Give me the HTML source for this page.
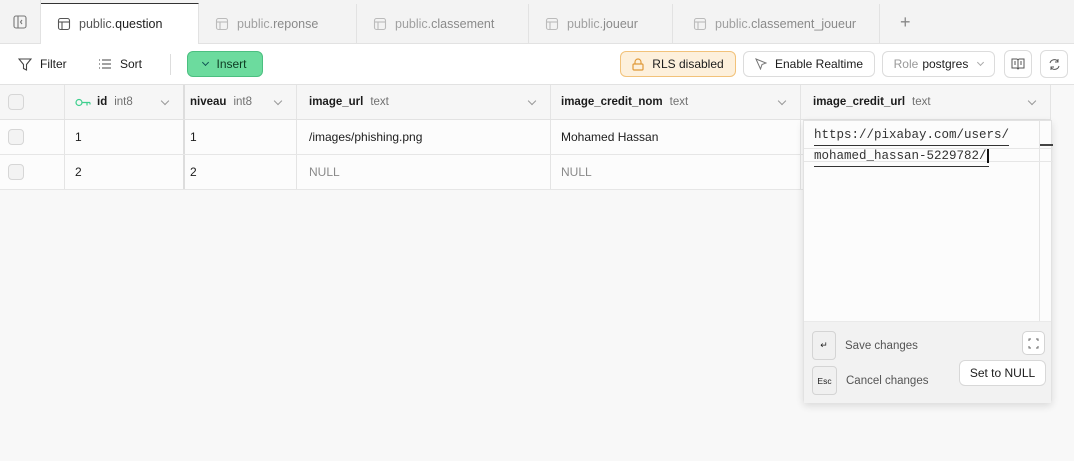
<!DOCTYPE html>
<html><head><meta charset="utf-8"><style>
*{box-sizing:border-box;margin:0;padding:0}
body{width:1074px;height:461px;overflow:hidden;background:#f8f8f8;font-family:"Liberation Sans",sans-serif;font-size:12px;color:#1c1c1c;position:relative}
.abs{position:absolute}
.tabbar{left:0;top:0;width:1074px;height:44px;background:#f3f3f3;border-bottom:1px solid #e2e2e2}
.tab{position:absolute;top:4px;height:40px;border-right:1px solid #e2e2e2;display:flex;align-items:center;padding-left:16px;gap:8px;color:#a0a0a0;font-size:12.5px}
.tab b{font-weight:normal;color:#8a8a8a}
.tab.act{background:#fff;border-top:1px solid #333;color:#555;height:41px}
.tab.act b{color:#1c1c1c}
.toolbar{left:0;top:44px;width:1074px;height:41px;background:#fff;border-bottom:1px solid #e2e2e2}
.btn{position:absolute;top:8px;height:25px;border:1px solid #dcdcdc;border-radius:6px;display:flex;align-items:center;justify-content:center;gap:8px;font-size:12px;background:#fff}
.hdr{left:0;top:85px;width:1051px;height:35px;background:#f6f6f6;border-bottom:1px solid #e2e2e2}
.cell{position:absolute;top:0;height:100%;border-right:1px solid #e4e4e4;display:flex;align-items:center;padding-left:10px}
.hdr .cell b{font-weight:bold;font-size:11.5px;margin-right:7px}
.hdr .cell i{font-style:normal;color:#707070;font-size:11.5px}
.chev{position:absolute;right:15px;top:13px;width:6px;height:6px;border-right:1px solid #999;border-bottom:1px solid #999;transform:rotate(45deg)}
.row{left:0;width:1051px;height:35px;background:#fcfcfc;border-bottom:1px solid #e6e6e6}
.cb{width:16px;height:16px;border:1px solid #d6d6d6;border-radius:4px;background:#f3f3f3;margin-left:0}
.pop{left:803px;top:120px;width:249px;height:283px;background:#fcfcfc;border:1px solid #e2e2e2;box-shadow:0 3px 8px rgba(0,0,0,.12);border-radius:0 0 4px 4px}
.key{position:absolute;width:24px;height:29px;border:1px solid #d4d4d4;border-radius:4px;background:#f0f0f0;display:flex;align-items:center;justify-content:center;font-size:9px}
</style></head><body>
<div class="abs tabbar">
 <div class="abs" style="left:0;top:0;width:41px;height:44px;display:flex;align-items:center;justify-content:center;border-right:1px solid #e2e2e2">
  <svg width="14" height="14" viewBox="0 0 14 14" fill="none" stroke="#777" stroke-width="1.1"><rect x="1" y="1" width="12" height="12" rx="2"/><line x1="5" y1="1" x2="5" y2="13"/><path d="M9 5L7.5 7L9 9"/></svg></div>
 <div class="tab act" style="left:41px;width:158px;top:3px"><svg width="14" height="14" viewBox="0 0 14 14" fill="none" stroke="#555" stroke-width="1.1"><rect x="1.5" y="1.5" width="11" height="11" rx="2"/><line x1="1.5" y1="5" x2="12.5" y2="5"/><line x1="5" y1="5" x2="5" y2="12.5"/></svg><span>public.<b>question</b></span></div>
 <div class="tab" style="left:199px;width:158px"><svg width="14" height="14" viewBox="0 0 14 14" fill="none" stroke="#bbb" stroke-width="1.1"><rect x="1.5" y="1.5" width="11" height="11" rx="2"/><line x1="1.5" y1="5" x2="12.5" y2="5"/><line x1="5" y1="5" x2="5" y2="12.5"/></svg><span>public.<b>reponse</b></span></div>
 <div class="tab" style="left:357px;width:172px"><svg width="14" height="14" viewBox="0 0 14 14" fill="none" stroke="#bbb" stroke-width="1.1"><rect x="1.5" y="1.5" width="11" height="11" rx="2"/><line x1="1.5" y1="5" x2="12.5" y2="5"/><line x1="5" y1="5" x2="5" y2="12.5"/></svg><span>public.<b>classement</b></span></div>
 <div class="tab" style="left:529px;width:144px"><svg width="14" height="14" viewBox="0 0 14 14" fill="none" stroke="#bbb" stroke-width="1.1"><rect x="1.5" y="1.5" width="11" height="11" rx="2"/><line x1="1.5" y1="5" x2="12.5" y2="5"/><line x1="5" y1="5" x2="5" y2="12.5"/></svg><span>public.<b>joueur</b></span></div>
 <div class="tab" style="left:673px;width:207px;padding-left:20px"><svg width="14" height="14" viewBox="0 0 14 14" fill="none" stroke="#bbb" stroke-width="1.1"><rect x="1.5" y="1.5" width="11" height="11" rx="2"/><line x1="1.5" y1="5" x2="12.5" y2="5"/><line x1="5" y1="5" x2="5" y2="12.5"/></svg><span>public.<b>classement_joueur</b></span></div>
 <div class="abs" style="left:900px;top:12px;font-size:18px;color:#888;line-height:20px">+</div>
</div>
<div class="abs toolbar">
 <div class="abs" style="left:18px;top:13px;display:flex;align-items:center;gap:8px"><svg width="14" height="13" viewBox="0 0 14 13" fill="none" stroke="#444" stroke-width="1.1"><path d="M1 1h12L8.5 6.5V12L5.5 10.5V6.5Z"/></svg>Filter</div>
 <div class="abs" style="left:98px;top:13px;display:flex;align-items:center;gap:8px"><svg width="14" height="12" viewBox="0 0 14 12" stroke="#444" stroke-width="1.1"><path d="M1 2h1M1 6h1M1 10h1M4 2h9M4 6h9M4 10h9"/></svg>Sort</div>
 <div class="abs" style="left:170px;top:10px;width:1px;height:21px;background:#ddd"></div>
 <div class="btn" style="left:187px;width:76px;top:7px;height:26px;background:#6cdb9e;border-color:#4bbf80;color:#0d3a22"><span style="width:5px;height:5px;border-right:1px solid #155;border-bottom:1px solid #155;transform:rotate(45deg);margin-top:-3px"></span>Insert</div>
 <div class="btn" style="left:620px;width:116px;top:7px;height:26px;background:#fdf0dc;border-color:#f2c27a"><svg width="12" height="13" viewBox="0 0 12 13" fill="none" stroke="#e09a3a" stroke-width="1.2"><rect x="1" y="6" width="10" height="6" rx="1"/><path d="M3 6V4a3 3 0 016 0v2"/></svg>RLS disabled</div>
 <div class="btn" style="left:743px;width:132px;top:7px;height:26px"><svg width="12" height="12" viewBox="0 0 12 12" fill="none" stroke="#777" stroke-width="1"><path d="M1 1l10 4-4 1.5L5.5 11Z"/></svg>Enable Realtime</div>
 <div class="btn" style="left:882px;width:113px;top:7px;height:26px;gap:4px"><span style="color:#999">Role</span> postgres <span style="width:5px;height:5px;border-right:1px solid #aaa;border-bottom:1px solid #aaa;transform:rotate(45deg);margin:-3px 0 0 6px"></span></div>
 <div class="btn" style="left:1004px;width:28px;top:6px;height:28px"><svg width="14" height="12" viewBox="0 0 14 12" fill="none" stroke="#555" stroke-width="1"><path d="M1 1h5l1 1 1-1h5v9H8l-1 1-1-1H1Z"/><path d="M7 2v9M3 4h2M3 6h2M9 4h2M9 6h2"/></svg></div>
 <div class="btn" style="left:1040px;width:28px;top:6px;height:28px"><svg width="13" height="13" viewBox="0 0 13 13" fill="none" stroke="#555" stroke-width="1"><path d="M2 5a4.5 4.5 0 018-1.5M11 8a4.5 4.5 0 01-8 1.5M10 1v3H7M3 12V9h3"/></svg></div>
</div>
<div class="abs hdr">
 <div class="cell" style="left:0;width:65px;padding-left:8px"><div class="cb"></div></div>
 <div class="cell" style="left:65px;width:120px;border-right:2px solid #ddd"><svg width="16" height="9" viewBox="0 0 16 9" fill="none" stroke="#3ecf8e" stroke-width="1.2" style="margin-right:6px"><circle cx="4" cy="4.5" r="3"/><path d="M7 4.5h8M12 4.5v3M15 4.5v2"/></svg><b>id</b><i>int8</i><span class="chev"></span></div>
 <div class="cell" style="left:185px;width:112px;padding-left:5px"><b>niveau</b><i>int8</i><span class="chev"></span></div>
 <div class="cell" style="left:297px;width:254px;padding-left:12px"><b>image_url</b><i>text</i><span class="chev"></span></div>
 <div class="cell" style="left:551px;width:250px;padding-left:10px"><b>image_credit_nom</b><i>text</i><span class="chev"></span></div>
 <div class="cell" style="left:801px;width:250px;padding-left:12px"><b>image_credit_url</b><i>text</i><span class="chev"></span></div>
</div>
<div class="abs row" style="top:120px">
 <div class="cell" style="left:0;width:65px;padding-left:8px"><div class="cb"></div></div>
 <div class="cell" style="left:65px;width:120px;border-right:2px solid #ddd">1</div>
 <div class="cell" style="left:185px;width:112px;padding-left:5px">1</div>
 <div class="cell" style="left:297px;width:254px;padding-left:12px">/images/phishing.png</div>
 <div class="cell" style="left:551px;width:250px;padding-left:10px">Mohamed Hassan</div>
</div>
<div class="abs row" style="top:155px">
 <div class="cell" style="left:0;width:65px;padding-left:8px"><div class="cb"></div></div>
 <div class="cell" style="left:65px;width:120px;border-right:2px solid #ddd">2</div>
 <div class="cell" style="left:185px;width:112px;padding-left:5px">2</div>
 <div class="cell" style="left:297px;width:254px;padding-left:12px;color:#8a8a8a">NULL</div>
 <div class="cell" style="left:551px;width:250px;padding-left:10px;color:#8a8a8a">NULL</div>
</div>
<div class="abs pop">
 <div class="abs" style="left:235px;top:0;width:1px;height:200px;background:#e4e4e4"></div>
 <div class="abs" style="left:0;top:27px;width:249px;height:14px;border-top:1px solid #e6e6e6;border-bottom:1px solid #e6e6e6"></div>
 <div class="abs" style="left:236px;top:23px;width:13px;height:2px;background:#444"></div>
 <div class="abs" style="left:10px;top:4px;font-family:'Liberation Mono',monospace;font-size:12.5px;line-height:20px;color:#333">
  <div style="border-bottom:1px solid #333;display:inline-block">https://pixabay.com/users/</div><br>
  <div style="border-bottom:1px solid #333;display:inline-block">mohamed_hassan-5229782/<span style="border-left:2px solid #111;margin-left:0"></span></div>
 </div>
 <div class="abs" style="left:0;top:200px;width:247px;height:82px;background:#f2f2f2;border-top:1px solid #eaeaea">
  <div class="key" style="left:8px;top:9px">↵</div>
  <div class="abs" style="left:41px;top:18px;color:#555;font-size:11.5px">Save changes</div>
  <div class="key" style="left:8px;top:44px;width:25px;font-size:8.5px">Esc</div>
  <div class="abs" style="left:42px;top:53px;color:#555;font-size:11.5px">Cancel changes</div>
  <div class="abs" style="left:218px;top:9px;width:23px;height:24px;border:1px solid #d4d4d4;border-radius:5px;background:#fff;display:flex;align-items:center;justify-content:center"><svg width="11" height="11" viewBox="0 0 11 11" fill="none" stroke="#666" stroke-width="1"><path d="M1 3V1h2M8 1h2v2M10 8v2H8M3 10H1V8"/></svg></div>
  <div class="abs" style="left:155px;top:38px;width:87px;height:26px;border:1px solid #d8d8d8;border-radius:6px;background:#fff;display:flex;align-items:center;justify-content:center;font-size:12px">Set to NULL</div>
 </div>
</div>
</body></html>
